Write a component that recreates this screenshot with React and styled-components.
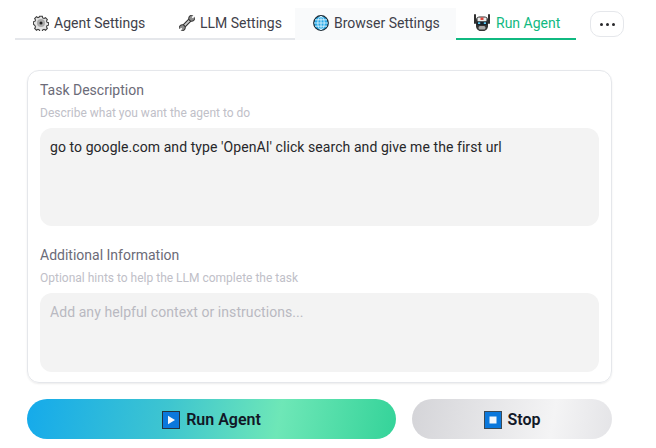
import React from "react";
import styled, { createGlobalStyle } from "styled-components";

const Global = createGlobalStyle`
    html, body {
        margin: 0;
        background: #ffffff;
        font-family: Roboto, "Noto Sans", sans-serif;
    }
    * {
        box-sizing: border-box;
    }
`;

const Page = styled.div`
    width: 656px;
    height: 448px;
    overflow: hidden;
    padding: 8px 0 0 15px;
`;

const TabRow = styled.div`
    display: flex;
    align-items: flex-start;
`;

const TabList = styled.div`
    display: flex;
    width: 561px;
    height: 32px;
    border-bottom: 2px solid #e5e7eb;
`;

const Tab = styled.div`
    display: flex;
    align-items: center;
    flex: none;
    gap: 5px;
    width: ${(p) => p.$width}px;
    height: 32px;
    padding: 0 0 1px ${(p) => p.$inset || 18}px;
    font-size: 14px;
    white-space: nowrap;
    color: ${(p) => (p.$active ? "#10b981" : "#3f3f4a")};
    background: ${(p) => (p.$hover ? "#f9fafb" : "transparent")};
    border-bottom: 2px solid ${(p) => (p.$active ? "#10b981" : "transparent")};
`;

const MoreButton = styled.div`
    display: flex;
    align-items: center;
    justify-content: center;
    gap: 3px;
    width: 34px;
    height: 26px;
    margin: 3px 0 0 14px;
    border: 1px solid #e5e7eb;
    border-radius: 10px;
`;

const Dot = styled.span`
    width: 3px;
    height: 3px;
    border-radius: 50%;
    background: #27272a;
`;

const Card = styled.div`
    width: 585px;
    height: 313px;
    margin: 30px 0 0 12px;
    padding: 10px 12px 9px;
    border: 1.5px solid #e5e7eb;
    border-radius: 12px;
    box-shadow: 0 1px 2px rgba(0, 0, 0, 0.08);
`;

const Label = styled.div`
    height: 20px;
    font-size: 14px;
    line-height: 18px;
    color: #6b6b78;
`;

const Hint = styled.div`
    height: 15px;
    margin-top: 4px;
    font-size: 12px;
    line-height: 16px;
    color: #c0c0c8;
`;

const Field = styled.div`
    height: ${(p) => p.$height}px;
    margin-top: 8px;
    margin-bottom: ${(p) => p.$after || 0}px;
    padding: 9px 10px;
    border-radius: 12px;
    background: #f3f3f3;
    font-size: 14px;
    line-height: 20px;
    letter-spacing: 0.07px;
    white-space: nowrap;
    color: ${(p) => (p.$placeholder ? "#b9b9c1" : "#27272a")};
`;

const Actions = styled.div`
    display: flex;
    gap: 16px;
    margin: 16px 0 0 12px;
`;

const ActionButton = styled.div`
    display: flex;
    align-items: center;
    justify-content: center;
    gap: 6px;
    flex: none;
    width: ${(p) => p.$width}px;
    height: 40px;
    padding-top: 1px;
    border-radius: 20px;
    font-size: 16px;
    font-weight: 600;
    color: #111827;
    background: ${(p) => p.$background};
`;

const GearIcon = () => (
    <svg width="16" height="16" viewBox="0 0 16 16">
        <path
            d="M6.600 1h2.800l.4 1.700 1.400.6 1.500-.9 2 2-.9 1.500.6 1.400 1.600.4v2.600l-1.600.4-.6 1.400.9 1.500-2 2-1.500-.9-1.400.6-.4 1.600H6.600l-.4-1.600-1.400-.6-1.500.9-2-2 .9-1.500-.6-1.400L0 9.300V6.700l1.600-.4.6-1.400-.9-1.500 2-2 1.500.9 1.400-.6z"
            fill="#e3e3e3"
            stroke="#3a3a3a"
            strokeWidth="1.100"
            transform="translate(.4 .4) scale(.95)"
        />
        <circle cx="8" cy="8" r="4" fill="#a9a9a9" />
        <circle cx="8" cy="8" r="1.500" fill="#222222" />
    </svg>
);

// double ended spanner, jaws at both tips
const WrenchIcon = () => (
    <svg width="16" height="16" viewBox="0 0 16 16">
        <path d="M3.200 12.800 12.800 3.200" stroke="#303030" strokeWidth="4" />
        <path d="M3.200 12.800 12.800 3.200" stroke="#c9c9c9" strokeWidth="1.800" />
        <circle cx="12.700" cy="3.300" r="3" fill="#8c8c8c" stroke="#2e2e2e" />
        <circle cx="3.300" cy="12.700" r="3" fill="#8c8c8c" stroke="#2e2e2e" />
        <path d="M12.700 3.300 14 -.5 16.500 2z" fill="#ffffff" />
        <path d="M3.300 12.700 2 16.500 -.5 14z" fill="#ffffff" />
    </svg>
);

const GlobeIcon = () => (
    <svg width="16" height="16" viewBox="0 0 16 16">
        <circle cx="8" cy="8" r="7.300" fill="#29a9e8" stroke="#1f2a33" strokeWidth="1.200" />
        <g fill="none" stroke="#d8f2fc" strokeWidth="0.900">
            <ellipse cx="8" cy="8" rx="3.200" ry="6.700" />
            <path d="M8 1v14M1 8h14M2 4.800h12M2 11.200h12" />
        </g>
    </svg>
);

const RobotIcon = () => (
    <svg width="18" height="18" viewBox="0 0 18 18">
        <path d="M2 1v8M16 1v8" stroke="#2f2f2f" strokeWidth="2" strokeLinecap="round" />
        <path d="M3 6c0-2 1.500-3.500 3.500-3.500h5C13.500 2.500 15 4 15 6v6c0 2.500-2 5-4.500 5h-3C5 17 3 14.500 3 12z" fill="#333333" />
        <rect x="4.500" y="3.500" width="9" height="4" rx="1" fill="#ececec" />
        <rect x="7.500" y="3.500" width="3" height="2.500" fill="#e0483e" />
        <rect x="3.500" y="7.500" width="11" height="3.500" rx="1.500" fill="#18222b" />
        <rect x="5" y="8.300" width="2.200" height="1.700" fill="#5ac8f2" />
        <rect x="10.800" y="8.300" width="2.200" height="1.700" fill="#5ac8f2" />
        <rect x="5.500" y="12" width="7" height="3.500" rx="1.500" fill="#a8a8a8" />
    </svg>
);

const PlayIcon = () => (
    <svg width="18" height="18" viewBox="0 0 18 18">
        <rect x="0.500" y="0.500" width="17" height="17" fill="#0b78dc" stroke="#23343f" />
        <path d="M6 4.800v8.400L13 9z" fill="#f4f8fc" />
    </svg>
);

const StopIcon = () => (
    <svg width="18" height="18" viewBox="0 0 18 18">
        <rect x="0.500" y="0.500" width="17" height="17" fill="#0b78dc" stroke="#3c4a55" />
        <rect x="5.500" y="5.500" width="7" height="7" fill="#f4f8fc" />
    </svg>
);

export default function App() {
    return (
        <Page>
            <Global />
            <TabRow>
                <TabList>
                    <Tab $width={146}>
                        <GearIcon />
                        Agent Settings
                    </Tab>
                    <Tab $width={134}>
                        <WrenchIcon />
                        LLM Settings
                    </Tab>
                    <Tab $width={161} $hover>
                        <GlobeIcon />
                        Browser Settings
                    </Tab>
                    <Tab $width={120} $inset={17} $active>
                        <RobotIcon />
                        Run Agent
                    </Tab>
                </TabList>
                <MoreButton>
                    <Dot />
                    <Dot />
                    <Dot />
                </MoreButton>
            </TabRow>
            <Card>
                <Label>Task Description</Label>
                <Hint>Describe what you want the agent to do</Hint>
                <Field $height={98} $after={20}>
                    go to google.com and type 'OpenAI' click search and give me the first url
                </Field>
                <Label>Additional Information</Label>
                <Hint>Optional hints to help the LLM complete the task</Hint>
                <Field $height={79} $placeholder>
                    Add any helpful context or instructions...
                </Field>
            </Card>
            <Actions>
                <ActionButton
                    $width={369}
                    $background="linear-gradient(100deg, #15aaeb 0%, #3ec5d0 38%, #6ee7b7 68%, #34d399 100%)"
                >
                    <PlayIcon />
                    Run Agent
                </ActionButton>
                <ActionButton
                    $width={200}
                    $background="linear-gradient(100deg, #d4d4d8 0%, #f4f4f5 70%, #e4e4e7 100%)"
                >
                    <StopIcon />
                    Stop
                </ActionButton>
            </Actions>
        </Page>
    );
}
